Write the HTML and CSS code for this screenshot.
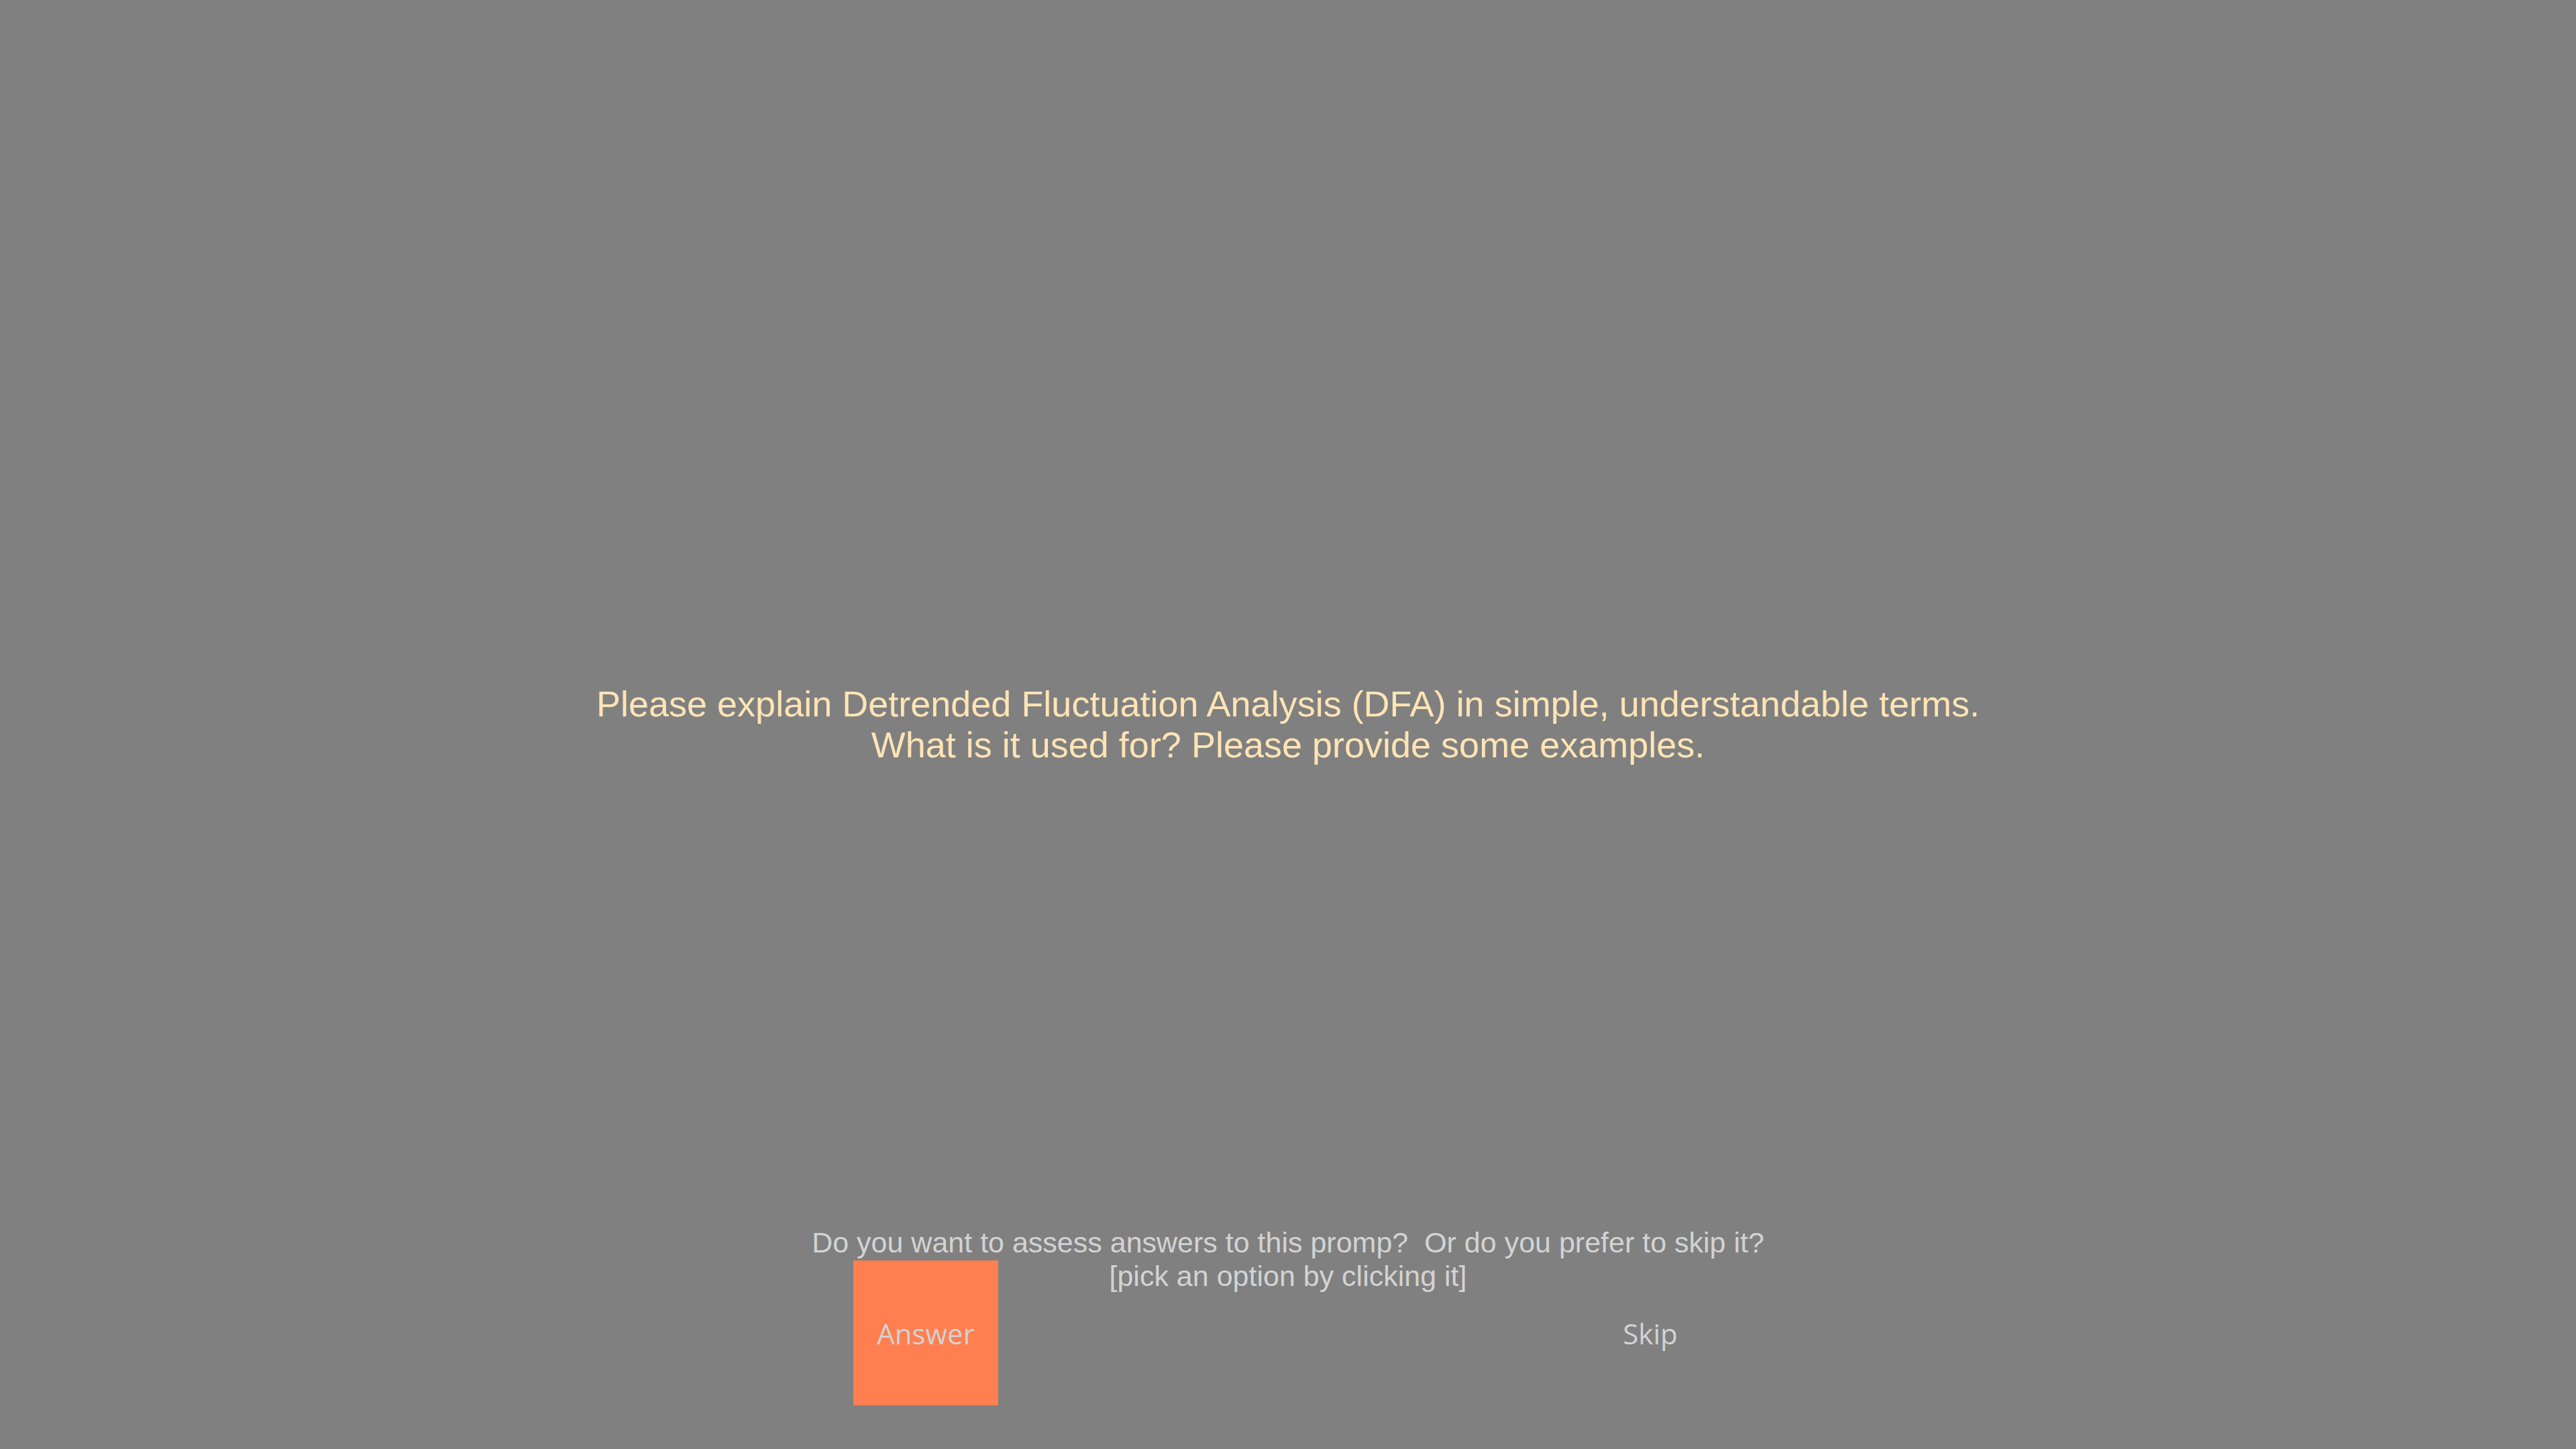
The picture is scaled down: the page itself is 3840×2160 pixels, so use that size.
FILE: index.html
```html
<!DOCTYPE html>
<html lang="en">
<head>
<meta charset="utf-8">
<title>Assess prompt</title>
<link rel="stylesheet" href="styles.css">
</head>
<body>
<div class="page">
  <div class="spacer"></div>
  <div class="prompt">
    <p class="prompt-line">Please explain Detrended Fluctuation Analysis (DFA) in simple, understandable terms.</p>
    <p class="prompt-line">What is it used for? Please provide some examples.</p>
  </div>
  <div class="bottom">
    <div class="question">
      <p class="question-line">Do you want to assess answers to this promp?  Or do you prefer to skip it?</p>
      <p class="question-line">[pick an option by clicking it]</p>
    </div>
    <div class="choices">
      <div class="choice"><button class="btn btn-answer" type="button">Answer</button></div>
      <div class="choice"><button class="btn btn-skip" type="button">Skip</button></div>
    </div>
  </div>
</div>
</body>
</html>
```
FILE: styles.css
```css
html, body {
  margin: 0;
  padding: 0;
}
body {
  background: #808080;
  width: 3840px;
  height: 2160px;
  overflow: hidden;
}
.page {
  height: 2160px;
  display: grid;
  grid-template-rows: 1fr auto 1fr;
}
.prompt {
  text-align: center;
  font-family: "Liberation Sans", Arial, sans-serif;
  font-size: 54px;
  line-height: 61px;
  color: #ffe4b5;
}
.prompt-line {
  margin: 0;
}
.bottom {
  align-self: end;
  display: flex;
  flex-direction: column;
  align-items: center;
  padding-bottom: 65px;
}
.question {
  text-align: center;
  font-family: "Liberation Sans", Arial, sans-serif;
  font-size: 43px;
  line-height: 50px;
  color: #d3d3d3;
}
.question-line {
  margin: 0;
  white-space: pre;
}
.choices {
  width: 2160px;
  display: grid;
  grid-template-columns: 1fr 1fr;
  margin-top: -48px;
}
.choice {
  display: flex;
  justify-content: center;
}
.btn {
  width: 216px;
  height: 216px;
  border: 0;
  padding: 0;
  margin: 0;
  font-family: "Open Sans", sans-serif;
  font-size: 42px;
  color: #d3d3d3;
  background: transparent;
  cursor: pointer;
}
.btn-answer {
  background: #ff7f50;
}
```
